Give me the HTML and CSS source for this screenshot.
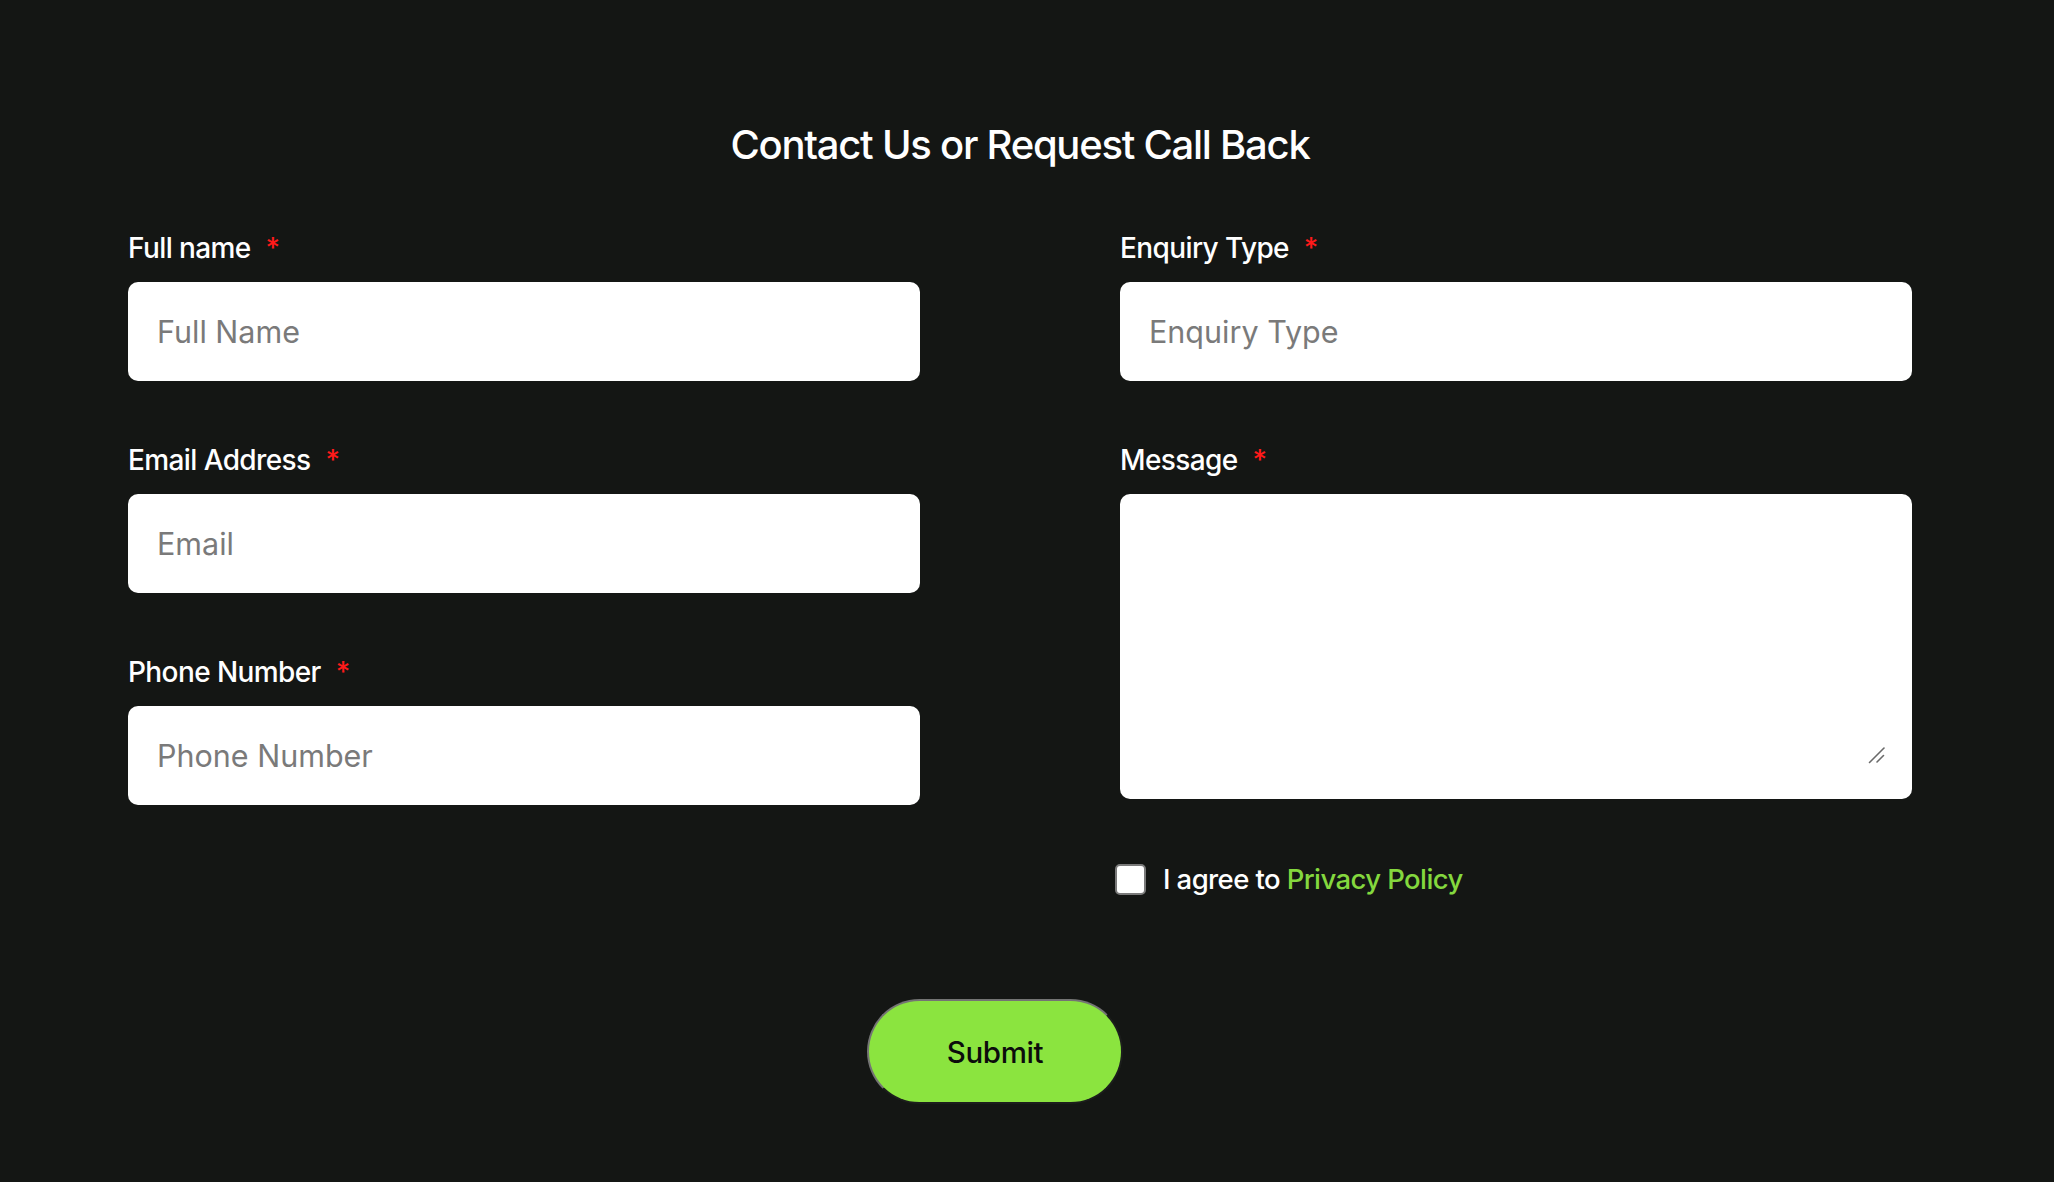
FILE: index.html
```html
<!DOCTYPE html>
<html lang="en">
<head>
<meta charset="utf-8">
<title>Contact Us</title>
<link rel="stylesheet" href="styles.css">
</head>
<body>
<section class="contact">
  <h2 class="title">Contact Us or Request Call Back</h2>
  <form class="form">
    <div class="col">
      <div class="field">
        <label class="label">Full name <span class="req">*</span></label>
        <input class="input" type="text" placeholder="Full Name">
      </div>
      <div class="field">
        <label class="label">Email Address <span class="req">*</span></label>
        <input class="input" type="email" placeholder="Email">
      </div>
      <div class="field">
        <label class="label">Phone Number <span class="req">*</span></label>
        <input class="input" type="tel" placeholder="Phone Number">
      </div>
    </div>
    <div class="col">
      <div class="field">
        <label class="label">Enquiry Type <span class="req">*</span></label>
        <input class="input" type="text" placeholder="Enquiry Type">
      </div>
      <div class="field">
        <label class="label">Message <span class="req">*</span></label>
        <div class="message-box">
          <textarea class="textarea"></textarea>
          <svg class="grip" width="18" height="18" viewBox="0 0 18 18" aria-hidden="true">
            <line x1="1.5" y1="16.5" x2="16" y2="2" stroke="#6a6a6a" stroke-width="1.6" stroke-linecap="round"/>
            <line x1="9" y1="16" x2="15.5" y2="9.5" stroke="#6a6a6a" stroke-width="1.6" stroke-linecap="round"/>
          </svg>
        </div>
      </div>
      <label class="agree">
        <input class="check" type="checkbox">
        <span>I agree to <a class="link" href="#">Privacy Policy</a></span>
      </label>
    </div>
    <div class="actions">
      <button class="submit" type="button">Submit</button>
    </div>
  </form>
</section>
</body>
</html>
```

FILE: styles.css
```css
html, body {
  margin: 0;
  padding: 0;
  background: #141614;
}
body {
  font-family: Inter, "Liberation Sans", sans-serif;
  color: #ffffff;
  width: 2054px;
  height: 1182px;
  overflow: hidden;
}
.contact {
  padding: 122px 142px 0 128px;
}
.title {
  margin: 0;
  text-align: center;
  font-size: 40px;
  line-height: 45px;
  font-weight: 500;
  letter-spacing: -1.25px;
}
.form {
  margin-top: 66px;
  display: grid;
  grid-template-columns: 1fr 1fr;
  column-gap: 200px;
}
.col {
  display: flex;
  flex-direction: column;
  gap: 64px;
}
.field {
  display: flex;
  flex-direction: column;
  gap: 19px;
}
.label {
  font-size: 28px;
  line-height: 30px;
  font-weight: 500;
  letter-spacing: -0.6px;
}
.req {
  color: #ff1a1a;
  margin-left: 8px;
}
.input {
  box-sizing: border-box;
  height: 99px;
  border: none;
  border-radius: 10px;
  background: #ffffff;
  padding: 0 29px;
  font-family: Inter, "Liberation Sans", sans-serif;
  font-size: 30.5px;
  color: #222;
  outline: none;
}
.input::placeholder {
  color: #7a7a7a;
}
.message-box {
  position: relative;
  box-sizing: border-box;
  height: 305px;
  background: #ffffff;
  border-radius: 10px;
  padding: 20px 29px;
  display: flex;
}
.textarea {
  flex: 1;
  border: none;
  outline: none;
  resize: none;
  background: #ffffff;
  font-family: Inter, "Liberation Sans", sans-serif;
  font-size: 30px;
  padding: 0;
}
.grip {
  position: absolute;
  right: 26px;
  bottom: 35px;
}
.agree {
  display: flex;
  align-items: center;
  gap: 17px;
  margin-left: -5px;
  font-size: 27.5px;
  line-height: 32px;
  font-weight: 500;
  letter-spacing: -0.6px;
}
.check {
  appearance: none;
  -webkit-appearance: none;
  margin: 0;
  width: 31px;
  height: 31px;
  box-sizing: border-box;
  border: 2px solid #7a7a7a;
  border-radius: 5px;
  background: #ffffff;
}
.link {
  color: #84d83e;
  text-decoration: none;
}
.actions {
  grid-column: 1 / -1;
  display: flex;
  justify-content: center;
  margin-top: 104px;
  padding-right: 50px;
}
.submit {
  box-sizing: border-box;
  width: 256px;
  height: 105px;
  border-radius: 53px;
  border: 2px solid;
  border-color: #747474 #1c1e1c #1c1e1c #747474;
  background: #8be43f;
  color: #0c0c0c;
  font-family: Inter, "Liberation Sans", sans-serif;
  font-size: 29.5px;
  font-weight: 500;
  letter-spacing: -0.4px;
}
```
